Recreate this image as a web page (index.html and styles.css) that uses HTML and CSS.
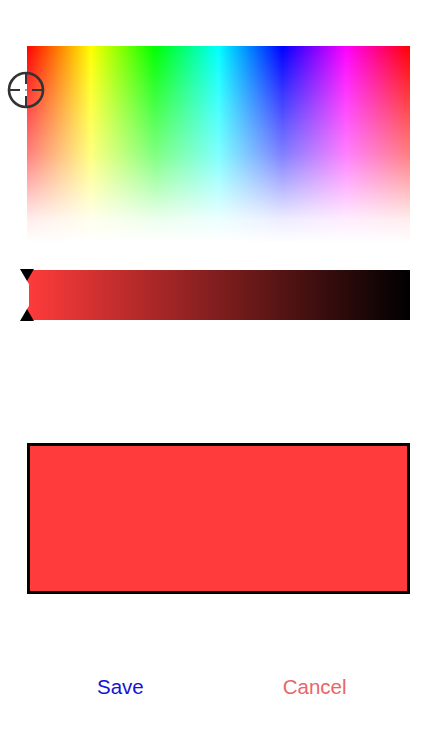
FILE: index.html
```html
<!DOCTYPE html>
<html>
<head>
<meta charset="utf-8">
<link rel="stylesheet" href="styles.css">
</head>
<body>
<div class="page">
  <div class="field">
    <div class="white"></div>
    <svg class="cross" width="40" height="40" viewBox="0 0 40 40">
      <circle cx="20" cy="20" r="17" fill="none" stroke="#333" stroke-width="2.6"/>
      <path d="M3 20H14M26 20H37M20 3V14M20 26V37" stroke="#333" stroke-width="2"/>
      <circle cx="20" cy="20" r="0.8" fill="#333"/>
    </svg>
  </div>
  <div class="slider">
    <svg class="marker" width="14" height="52" viewBox="0 0 14 52">
      <path d="M7 12L9 15V37L7 40Z" fill="#fff"/>
      <path d="M0 0H14L7 12Z M0 52H14L7 40Z" fill="#000"/>
    </svg>
  </div>
  <div class="preview"></div>
  <div class="buttons">
    <span class="save">Save</span>
    <span class="cancel">Cancel</span>
  </div>
</div>
</body>
</html>
```
FILE: styles.css
```css
html, body {
  margin: 0;
  padding: 0;
  background: #fff;
}
.page {
  width: 438px;
  height: 750px;
  box-sizing: border-box;
  padding: 46px 28px 0 27px;
  display: flex;
  flex-direction: column;
  font-family: "Liberation Sans", Arial, sans-serif;
}
.field {
  position: relative;
  height: 197px;
  background: linear-gradient(to right, #f00 0%, #ff0 16.67%, #0f0 33.33%, #0ff 50%, #00f 66.67%, #f0f 83.33%, #f00 100%);
}
.white {
  position: absolute;
  inset: 0;
  background: linear-gradient(to bottom, rgba(255,255,255,0) 0%, rgba(255,255,255,0.5) 55%, rgba(255,255,255,0.93) 88%, #fff 100%);
}
.cross {
  position: absolute;
  left: -21px;
  top: 24px;
}
.slider {
  position: relative;
  margin-top: 27px;
  height: 50px;
  background: linear-gradient(to right, #ff3b3b, #000);
}
.marker {
  position: absolute;
  left: -7px;
  top: -1px;
}
.preview {
  margin-top: 123px;
  height: 145px;
  border: 3px solid #000;
  background: #ff3b3b;
}
.buttons {
  display: flex;
  margin-top: 81px;
  font-size: 20.5px;
}
.save {
  margin-left: 70px;
  color: #1414d6;
}
.cancel {
  margin-left: 139px;
  color: #e96666;
}
```
